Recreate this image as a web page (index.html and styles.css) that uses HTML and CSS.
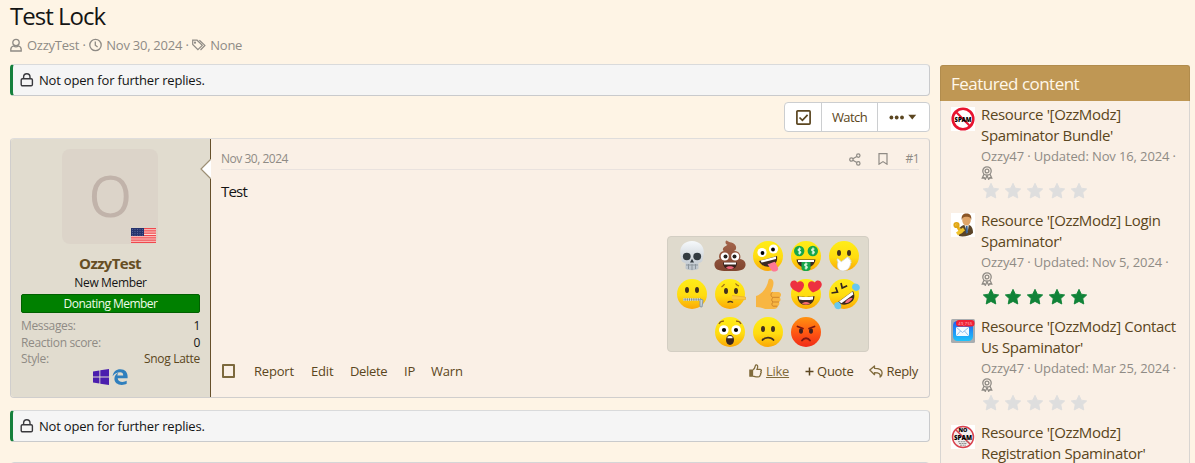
FILE: index.html
```
<!DOCTYPE html>
<html lang="en">
<head>
<meta charset="utf-8">
<title>Test Lock</title>
<link rel="stylesheet" href="styles.css">
</head>
<body>
<svg class="sprite" width="0" height="0" aria-hidden="true">
  <defs>
    <linearGradient id="yellow" x1="0" y1="0" x2="0" y2="1"><stop offset="0" stop-color="#ffed18"/><stop offset=".55" stop-color="#ffdc10"/><stop offset="1" stop-color="#fba706"/></linearGradient>
    <linearGradient id="red" x1="0" y1="0" x2="0" y2="1"><stop offset="0" stop-color="#ff9210"/><stop offset=".5" stop-color="#ff5a12"/><stop offset="1" stop-color="#f02a18"/></linearGradient>
    <linearGradient id="bone" x1="0" y1="0" x2="0" y2="1"><stop offset="0" stop-color="#f6f9fb"/><stop offset="1" stop-color="#b9c1c9"/></linearGradient>
    <linearGradient id="brown" x1="0" y1="0" x2="0" y2="1"><stop offset="0" stop-color="#a4654c"/><stop offset="1" stop-color="#80452f"/></linearGradient>
    <linearGradient id="mail" x1="0" y1="0" x2="0" y2="1"><stop offset="0" stop-color="#1e5df0"/><stop offset="1" stop-color="#1fc4fb"/></linearGradient>
    <symbol id="lock" viewBox="0 0 14 14"><g fill="none" stroke="currentColor" stroke-width="1.4"><rect x="1.2" y="5.8" width="11.2" height="7" rx="1.3"/><path d="M3.6 5.8V4a3.2 3.2 0 0 1 6.4 0v1.800"/></g></symbol>
    <symbol id="star" viewBox="0 0 18 18"><path stroke="currentColor" stroke-width=".9" stroke-linejoin="round" d="M9 1.300l2.300 4.900 5.400.7-3.900 3.700 1 5.400L9 13.400 4.200 16l1-5.400L1.300 6.900l5.400-.7z"/></symbol>
    <symbol id="award" viewBox="0 0 12 14"><g fill="none" stroke="currentColor" stroke-width="1.3"><circle cx="6" cy="5" r="4.200"/><circle cx="6" cy="5" r="1.900"/><path d="M3 8.300L1.300 12l2-.2 1 1.500L6 9.700l1.700 3.600 1-1.500 2 .2L9 8.300"/></g></symbol>
  </defs>
</svg>
<div class="page">
  <main class="main">
    <h1 class="title">Test Lock</h1>
    <div class="byline">
      <svg class="user-icon" width="12" height="14" viewBox="0 0 12 14" fill="none" stroke="currentColor" stroke-width="1.300"><circle cx="6" cy="4.500" r="3.200"/><path d="M3.500 8C1.800 8.500.8 9.700.8 11.400V13h10.400v-1.600c0-1.700-1-2.900-2.700-3.400-1.500 1-3.500 1-5 0z"/></svg>
      <span>OzzyTest</span><span class="dot">·</span>
      <svg class="clock-icon" width="13" height="14" viewBox="0 0 13 14" fill="none" stroke="currentColor" stroke-width="1.300"><circle cx="6.500" cy="7" r="5.700"/><path d="M6.300 3.500v3.800l2.300 1.800"/></svg>
      <span class="byline-date">Nov 30, 2024</span><span class="dot">·</span>
      <svg class="tags-icon" width="14" height="14" viewBox="0 0 14 14" fill="none" stroke="currentColor" stroke-width="1.200"><path d="M.7 2.500v4l5.200 5.200 4.400-4.400-5.200-5.100H.7z"/><path d="M7.400 2.200l5.500 5.200L8.500 12"/><circle cx="3" cy="4.700" r=".5"/></svg>
      <span>None</span>
    </div>

    <div class="notice"><svg width="14" height="14"><use href="#lock"/></svg><span>Not open for further replies.</span></div>

    <div class="toolbar">
      <div class="buttons">
        <a class="button button-check"><svg width="15" height="15" viewBox="0 0 15 15" fill="none" stroke="currentColor" stroke-width="1.700"><rect x=".9" y=".9" width="13.200" height="13.200" rx=".8"/><path d="M3.500 7.500l2.900 2.900 5.200-5.600"/></svg></a>
        <a class="button button-watch">Watch</a>
        <a class="button button-more"><svg width="28" height="8" viewBox="0 0 28 8" fill="currentColor"><circle cx="2.400" cy="4.500" r="1.900"/><circle cx="7.700" cy="4.500" r="1.900"/><circle cx="13" cy="4.500" r="1.900"/><path d="M19.300 1.700h7.900l-3.950 4.800z"/></svg></a>
      </div>
    </div>

    <article class="post">
      <section class="user">
        <div class="avatar"><span>O</span>
          <svg class="flag" width="25" height="15" viewBox="0 0 25 15"><path fill="#fdd9d4" d="M0 0h25v15H0z"/><path stroke="#f0484d" stroke-width="1.250" d="M0 .6h25M0 2.900h25M0 5.200h25M0 7.500h25M0 9.800h25M0 12.100h25M0 14.400h25"/><path fill="#26336d" d="M0 0h13v8H0z"/><path stroke="#6b76a6" stroke-width=".7" stroke-dasharray="1 1.500" d="M1 1.500h12M1 3.500h12M1 5.500h12M1 7.300h12"/></svg>
        </div>
        <h4 class="name">OzzyTest</h4>
        <div class="role">New Member</div>
        <div class="banner">Donating Member</div>
        <dl class="stats">
          <div><dt>Messages:</dt><dd>1</dd></div>
          <div><dt>Reaction score:</dt><dd>0</dd></div>
          <div><dt>Style:</dt><dd class="link">Snog Latte</dd></div>
        </dl>
        <div class="agents">
          <svg width="16" height="16" viewBox="0 0 16 16" fill="#4b1eae"><path d="M0 2.400l6.400-.9v6H0zM7.300 1.300L16 0v7.500H7.300zM0 8.400h6.400v6L0 13.500zM7.300 8.400H16V16l-8.700-1.300z"/></svg>
          <svg width="16" height="16" viewBox="0 0 16 16"><path fill="#2f7fbd" d="M.6 7.200C1.300 2.600 4.200.2 8.300.2c4.900 0 7.300 3.200 7.300 7.300v1.700H5.700c.2 2.500 2.300 3.700 4.800 3.700 1.600 0 3-.4 4.200-1.100v3c-1.400.8-3 1.100-4.900 1.100-4.500 0-7.400-2.500-7.400-6.100 0-2.700 1.500-4.800 3.900-6-.5.700-.8 1.500-.9 2.600h5.800c0-2.100-1-3.200-3-3.200-3 0-5.700 1.500-7.600 4z"/></svg>
        </div>
        <svg class="arrow" width="11" height="20" viewBox="0 0 11 20"><path fill="#fff" d="M11 0L1 10l10 10z"/><path fill="none" stroke="#9c8f75" stroke-width="1.200" d="M10.500.5L1 10l9.500 9.500"/></svg>
      </section>
      <section class="content">
        <header class="post-head">
          <span class="date">Nov 30, 2024</span>
          <div class="post-tools">
            <svg width="12" height="13" viewBox="0 0 12 13" fill="none" stroke="currentColor" stroke-width="1.200"><circle cx="2.400" cy="6.500" r="1.700"/><circle cx="9.300" cy="2.600" r="1.700"/><circle cx="9.300" cy="10.400" r="1.700"/><path d="M3.900 5.700l3.900-2.300M3.900 7.300l3.900 2.300"/></svg>
            <svg width="10" height="12" viewBox="0 0 10 12" fill="none" stroke="currentColor" stroke-width="1.200"><path d="M1 .7h8v10.500L5 8.600l-4 2.600z"/></svg>
            <span>#1</span>
          </div>
        </header>
        <p class="text">Test</p>
        <footer class="actions">
          <span class="box"></span>
          <a class="a-report">Report</a><a class="a-edit">Edit</a><a class="a-delete">Delete</a><a class="a-ip">IP</a><a class="a-warn">Warn</a>
          <div class="respond">
            <a class="like"><svg width="13" height="14" viewBox="0 0 13 14" fill="none" stroke="#806b3c" stroke-width="1.300"><path d="M3.500 6.300c1.700-1 2.600-2.500 2.900-4.600.2-1.200 2.200-1.300 2.300.7.100 1-.3 2-.7 3h3c1.500 0 1.700 1.500.9 2.200.5.700.3 1.500-.3 2 .2.800 0 1.400-.6 1.800 0 1-.6 1.500-1.700 1.500H7c-1.500 0-2.400-.8-3.500-.8z"/><path fill="#806b3c" d="M.9 6.200h1.500v6H.9z"/></svg><u>Like</u></a>
            <a class="quote"><svg width="9" height="9" viewBox="0 0 9 9" stroke="currentColor" stroke-width="1.500"><path d="M4.500.5v8M.5 4.500h8"/></svg>Quote</a>
            <a class="reply"><svg width="14" height="13" viewBox="0 0 14 13" fill="none" stroke="#806b3c" stroke-width="1.300" stroke-linejoin="round"><path d="M.8 5L5.500 1v2.300c4.500 0 7.600.8 7.600 4.700 0 1.700-.7 3-2 4 .6-3-.8-4.300-5.600-4.300V9.700z"/></svg>Reply</a>
          </div>
        </footer>
        <div class="reactions">
          <svg viewBox="0 0 32 32"><path fill="url(#bone)" d="M16 1C8.500 1 4.200 6 4.200 12c0 3 .8 5 1 7 .2 2.600 1.300 3.500 4.300 4v5.500c2 2.200 11 2.200 13 0V23c3-.5 4.100-1.400 4.300-4 .2-2 1-4 1-7C27.800 6 23.500 1 16 1z"/><g fill="#343c42"><ellipse cx="10.800" cy="16.500" rx="3.900" ry="3.700"/><ellipse cx="21.200" cy="16.500" rx="3.900" ry="3.700"/><path d="M16 18.800l2 3.700h-4z"/></g><path stroke="#8c959c" stroke-width="1" d="M10 25h12M12.500 24v5M16 24v6M19.500 24v5"/></svg>
          <svg viewBox="0 0 32 32"><path fill="url(#brown)" d="M11.500 2.200c0-1 1-2.200 1.600-1.400 1.200 1.700 7.300 1.400 8.700 5.300 1 2.700-.5 4.500-1.800 5 4.500 0 7.500 3.300 6 8 4.500.5 6.300 4.200 5.300 7.200-1.500 4.700-6.500 4.700-15.300 4.700S2 31 .7 26.300c-1-3.600 1.300-6.700 5-7.200-2-4 1-7.500 4-8-3-3 3-5.400 3.800-6.300-1.200-.3-2-1.300-2-2.600z"/><circle cx="10.800" cy="16.500" r="4" fill="#fff"/><circle cx="21.200" cy="16.500" r="4" fill="#fff"/><circle cx="11.500" cy="16.500" r="2" fill="#24201e"/><circle cx="20.500" cy="16.500" r="2" fill="#24201e"/><path fill="#37221c" d="M9 22.500h14c0 4.800-3 6.700-7 6.700s-7-1.900-7-6.700z"/><path fill="#fff" d="M10 22.500h12v2H10z"/><path fill="#ef6479" d="M12 27.500c2-1.600 6-1.600 8 0-2 2-6 2-8 0z"/></svg>
          <svg viewBox="0 0 32 32"><circle cx="16" cy="16" r="15" fill="url(#yellow)"/><circle cx="10" cy="12.500" r="4.600" fill="#fff"/><circle cx="21.500" cy="9" r="4.600" fill="#fff"/><circle cx="10.500" cy="13" r="1.900"/><circle cx="21" cy="9.500" r="1.900"/><path fill="#3b2a24" d="M7 21l18-5c1 6-2.300 9.700-6.800 10.500C13.500 27.400 9 25.500 7 21z"/><path fill="#fff" d="M8.500 20.600l15.500-4.200v2.500L9.600 22.500z"/><path fill="#ff7895" d="M15.500 24c2.500-.2 5-2 7.500-2.300l2.700 5.300c1.300 2.700-.7 4.200-2.400 4.500-2.200.4-3.700-.5-4.700-2.500z"/></svg>
          <svg viewBox="0 0 32 32"><circle cx="16" cy="16" r="15" fill="url(#yellow)"/><circle cx="9.200" cy="11" r="5.200" fill="#16a54a"/><circle cx="22.800" cy="11" r="5.200" fill="#16a54a"/><path fill="#3b2a24" d="M6.500 19.500h19c-.8 5.500-4.500 8-9.500 8s-8.700-2.500-9.500-8z"/><path fill="#fff" d="M8 20h16v2H8z"/><path fill="#16a54a" d="M11.500 22h9v6.500c0 3.400-9 3.400-9 0z"/><g fill="none" stroke="#d9f7dc" stroke-width="1.200"><path id="dollar" d="M11 9.200c-2-1.200-4 .8-2 1.700 2.500.7 2.500 2.800-.8 2.100M9.500 7.500v7"/><use href="#dollar" x="13.500"/><use href="#dollar" x="6.500" y="15"/></g></svg>
          <svg viewBox="0 0 32 32"><circle cx="16" cy="16" r="15" fill="url(#yellow)"/><ellipse cx="11" cy="13" rx="2" ry="3" fill="#42301f"/><ellipse cx="21" cy="13" rx="2" ry="3" fill="#42301f"/><path fill="#fff" stroke="#cfd5da" stroke-width=".8" d="M10 22l-1-2c0-1.500 1.300-1.500 2-.3l2.300 2 6-4.500c1-.8 2 .4 1.200 1.200 1.300-.6 2 .6 1.200 1.300 1.200-.2 1.500 1 .8 1.600 1 .1 1 1.300.2 1.800-.7 5-3.700 7.900-7.700 7.900-4.500 0-6.500-4-5-9z"/></svg>
          <svg viewBox="0 0 32 32"><circle cx="16" cy="16" r="15" fill="url(#yellow)"/><ellipse cx="11" cy="12" rx="2" ry="3" fill="#42301f"/><ellipse cx="21" cy="12" rx="2" ry="3" fill="#42301f"/><path stroke="#788994" stroke-width="2" d="M7.500 21.500H25"/><path stroke="#d0dadd" stroke-width="3" stroke-dasharray="1 1.200" d="M7.500 21.500H25"/><path stroke="#8b9ba5" fill="#c8d2d7" d="M24 21l3 1-1 7-2-.4z"/></svg>
          <svg viewBox="0 0 32 32"><circle cx="16" cy="16" r="15" fill="url(#yellow)"/><ellipse cx="12" cy="13" rx="2" ry="3" fill="#42301f"/><ellipse cx="22" cy="13" rx="2" ry="3" fill="#42301f"/><path fill="#fbc83e" stroke="#e5a82e" stroke-width=".6" d="M18 17.500l13 1.500c1.400.3 1.400 2.500 0 2.700L18 21.800"/><path fill="none" stroke="#513724" stroke-width="1.500" d="M13.500 24.500c1.500-1 4-1 5.500 0"/><path fill="none" stroke="#a06f18" stroke-width="1.200" d="M7.500 9c1.500-1 2.500-1.800 3-3M21.500 5.500c1 1.500 2 2 3.500 2.500"/></svg>
          <svg viewBox="0 0 32 32"><path fill="#f8b642" d="M4 18c6-2 11-8 12.500-16 .3-2 5-2 5 2.700 0 3.300-1.500 6.300-2.500 9.300H26c4 0 3.500 5 1.500 5.300 1.700 1.400 1.200 4-.5 4.700 1 1.700 0 3.800-1.500 4.200.2 2-1.200 2.800-3.500 2.800h-7c-4 0-6-2-11-2z"/><path fill="none" stroke="#cf852a" d="M27.500 19.300h-7c-2-.8-2-4 0-5M27 24h-6c-1.700-.6-1.700-3.700 0-4.500M25.500 28.200H21c-1.500-.6-1.500-3.400 0-4"/></svg>
          <svg viewBox="0 0 32 32"><circle cx="16" cy="16" r="15" fill="url(#yellow)"/><path id="heart" fill="#ed3140" d="M9 14.500C4 12.800-.3 9.500.3 5.800 1 2 5.500 1.300 7.400 4.500c2.600-2.600 7-.8 6.600 3-.2 2.700-2.500 5.500-5 7z"/><use href="#heart" transform="translate(32 0) scale(-1 1)"/><path fill="#422b21" d="M7.500 18c5 1.200 12 1.200 17 0 0 6-3.500 9-8.500 9s-8.500-3-8.500-9z"/><path fill="#fff" d="M9 18.500c4 .8 10 .8 14 0v3c-4 .7-10 .7-14 0z"/><path fill="#f36a6a" d="M12 25.500c2-2 6-2 8 0-2 1.500-6 1.500-8 0z"/></svg>
          <svg viewBox="0 0 32 32"><circle cx="16" cy="16" r="15" fill="url(#yellow)"/><path fill="none" stroke="#33261e" stroke-width="1.700" d="M3.500 15l6-1-1.800-4.800M13 5l1.200 5 5-2.200"/><path fill="#3b2820" d="M10 24L25 13c2.500 5 1.400 9-2.400 11.600C18.500 27.400 13 27.500 10 24z"/><path fill="#fff" d="M11 23.500l13.500-10 .9 3-12 8.800z"/><path fill="#f26e85" d="M17 25c1-3 4.500-5.400 7.500-5-1 3-4.500 5.500-7.500 5z"/><path fill="#67c7ef" d="M24 10c0-5 3-5 5.500-4 3.500 1.500 3 7-1 7-2 0-3-1.300-4.500-3zM11 24c-5-.2-5.300 2.600-4.300 5 1.500 3.300 7 2.700 6.600-1-.1-1.600-1-2.600-2.300-4z"/></svg>
          <svg viewBox="0 0 32 32"><circle cx="16" cy="16" r="15" fill="url(#yellow)"/><circle cx="9.800" cy="14" r="4.800" fill="#fff"/><circle cx="22.200" cy="14" r="4.800" fill="#fff"/><circle cx="10" cy="14" r="2.100"/><circle cx="22" cy="14" r="2.100"/><ellipse cx="16" cy="24" rx="4" ry="5" fill="#3b2720"/><path fill="#fff" d="M13.500 20.800c1.500-1 3.500-1 5 0v1.500h-5z"/><path fill="none" stroke="#8d5c14" stroke-width="1.300" d="M5 8c1-2 3-3 5-2.800M27 8c-1-2-3-3-5-2.800"/></svg>
          <svg viewBox="0 0 32 32"><circle cx="16" cy="16" r="15" fill="url(#yellow)"/><ellipse cx="11" cy="13" rx="2" ry="3" fill="#42301f"/><ellipse cx="21" cy="13" rx="2" ry="3" fill="#42301f"/><path fill="none" stroke="#42301f" stroke-width="1.800" stroke-linecap="round" d="M10.500 24c2.500-3.300 8.500-3.300 11 0"/></svg>
          <svg viewBox="0 0 32 32"><circle cx="16" cy="16" r="15" fill="url(#red)"/><ellipse cx="11" cy="15" rx="2" ry="2.800" fill="#42201f"/><ellipse cx="21" cy="15" rx="2" ry="2.800" fill="#42201f"/><path fill="none" stroke="#7d1610" stroke-width="1.800" stroke-linecap="round" d="M7.500 10.500l5.500 2M24.500 10.500l-5.500 2M12 24.500c2-3 6-3 8 0"/></svg>
        </div>
      </section>
    </article>

    <div class="notice notice-end"><svg width="14" height="14"><use href="#lock"/></svg><span>Not open for further replies.</span></div>
    <div class="next-block"></div>
  </main>

  <aside class="sidebar">
    <h3 class="side-title">Featured content</h3>
    <ul class="features">
      <li>
        <svg class="thumb" viewBox="0 0 24 24"><path fill="#fff" d="M0 0h24v24H0z"/><circle cx="12" cy="12" r="10.300" fill="none" stroke="#e8142f" stroke-width="2.600"/><path stroke="#e8142f" stroke-width="2" d="M4.800 4.800l14.400 14.400"/><text class="spam" x="12" y="14.800" textLength="17" lengthAdjust="spacingAndGlyphs">SPAM</text></svg>
        <div><a>Resource '[OzzModz]<br>Spaminator Bundle'</a><p>Ozzy47 · Updated: Nov 16, 2024 ·<br><svg class="award"><use href="#award"/></svg></p><div class="stars"><svg><use href="#star"/></svg><svg><use href="#star"/></svg><svg><use href="#star"/></svg><svg><use href="#star"/></svg><svg><use href="#star"/></svg></div></div>
      </li>
      <li>
        <svg class="thumb" viewBox="0 0 24 24"><path fill="#fff" d="M0 0h24v24H0z"/><path fill="#5a4428" d="M8 23c-1-7 1-10 5-11h5c3 1 4 4 4 8-3 3-10 4-14 3z"/><path fill="#e8edf0" d="M13 11h5l-1.500 9z"/><path fill="#3a6296" d="M15 13h1.500l.5 6-1.300 2-1-2z"/><ellipse cx="15.500" cy="7" rx="4.300" ry="5.500" fill="#e0a568"/><path fill="#8b5526" d="M10.800 7C10 2 12.500.5 15.500.5S21 2 20.200 7c-.7-3-2-3.500-4.700-3.300C13 3.500 11.500 4 10.800 7z"/><path fill="none" stroke="#e9b11c" stroke-width="3" d="M5 11l3 5 3 4"/><circle cx="5.500" cy="12" r="2.200" fill="none" stroke="#e0a514" stroke-width="1.800"/><path stroke="#f0c32d" stroke-width="3.500" d="M6 21l7-5"/></svg>
        <div><a>Resource '[OzzModz] Login<br>Spaminator'</a><p>Ozzy47 · Updated: Nov 5, 2024 ·<br><svg class="award"><use href="#award"/></svg></p><div class="stars rated"><svg><use href="#star"/></svg><svg><use href="#star"/></svg><svg><use href="#star"/></svg><svg><use href="#star"/></svg><svg><use href="#star"/></svg></div></div>
      </li>
      <li>
        <svg class="thumb" viewBox="0 0 24 24"><rect width="24" height="24" rx="1.500" fill="#a9adb0"/><rect x="2" y="2" width="20" height="20" rx="4.500" fill="url(#mail)"/><rect x="5" y="8" width="13" height="9" rx="1" fill="#f4faff"/><path fill="none" stroke="#76afe8" stroke-width=".8" d="M5.500 8.500l6 5 6-5M5.500 16.500l4-4.500M17.500 16.500l-4-4.500"/><rect x="5" y="1" width="18.500" height="6.500" rx="3" fill="#f02035"/><text class="count" x="14.300" y="6.100" textLength="14">49,755</text></svg>
        <div><a>Resource '[OzzModz] Contact<br>Us Spaminator'</a><p>Ozzy47 · Updated: Mar 25, 2024 ·<br><svg class="award"><use href="#award"/></svg></p><div class="stars"><svg><use href="#star"/></svg><svg><use href="#star"/></svg><svg><use href="#star"/></svg><svg><use href="#star"/></svg><svg><use href="#star"/></svg></div></div>
      </li>
      <li>
        <svg class="thumb" viewBox="0 0 24 24"><path fill="#fff" d="M0 0h24v24H0z"/><circle cx="12" cy="12" r="10.500" fill="#f3eeee" stroke="#d9424d" stroke-width="1.500"/><path stroke="#d9424d" stroke-width="1.600" d="M4.500 4.500l15 15"/><text class="no" x="12" y="6.900">NO</text><text class="spam" x="12" y="14.600" textLength="18" lengthAdjust="spacingAndGlyphs">SPAM</text><path stroke="#777" stroke-width=".8" stroke-dasharray="2 .6" d="M7 16.700h10M8 18.500h8M9 20.200h6"/></svg>
        <div><a>Resource '[OzzModz]<br>Registration Spaminator'</a></div>
      </li>
    </ul>
  </aside>
</div>
</body>
</html>
```
FILE: styles.css
```
*{box-sizing:border-box}
body{margin:0;background:#fef4e5;color:#141414;font:13px/18px "Open Sans","Noto Sans",sans-serif;letter-spacing:-.19px;overflow:hidden}
h1,h3,h4,p,dl,dd,ul{margin:0;padding:0;font-weight:400}
svg{display:block;flex:none}
.sprite{position:absolute}
.page{display:flex;gap:10px;height:463px;padding:0 5px 0 10px;overflow:hidden}
.main{width:920px;flex:none}
.title{height:36px;font-size:24px;line-height:32px;letter-spacing:-1px}
.byline{display:flex;align-items:center;height:18px;color:#8f8b85;letter-spacing:-.25px}
.user-icon{margin-right:5px}
.byline .dot{margin:0 3.500px}
.clock-icon{margin-right:4px}
.tags-icon{margin-right:4px}
.notice{display:flex;align-items:center;gap:5px;height:32px;margin-top:10px;padding-left:7px;border:1px solid #c9cacc;border-left:3px solid #15803d;border-radius:4px;background:#f5f5f5;border-top-color:#d9dadb}
.notice svg{color:#39393d}
.toolbar{display:flex;justify-content:flex-end;margin:6px 0}
.buttons{display:flex;height:30px;border:1px solid #ccced0;border-radius:4px;background:#fff;color:#5b4620}
.button{display:flex;align-items:center;justify-content:center;border-left:1px solid #ccced0;letter-spacing:-.6px}
.button:first-child{border-left:0}
.button-check{width:36px}
.button-watch{width:56px}
.button-more{width:52px;padding-right:2px}
.post{display:flex;height:260px;border:1px solid #d0cecd;border-top-color:#dfdddc;border-radius:4px;background:#faf0e6}
.user{position:relative;width:200px;padding:10px;background:#e1dccf;border-right:1px solid #66502b;border-radius:3px 0 0 3px;font-size:12px;line-height:16px;letter-spacing:-.35px;text-align:center}
.arrow{position:absolute;right:-1px;top:20px}
.avatar{position:relative;display:flex;align-items:center;justify-content:center;width:96px;height:95px;margin:0 auto 0 41px;border-radius:8px;background:#dcd4c9;color:#c1b3aa;font-size:56px;line-height:95px}
.avatar span{margin-top:-2px}
.flag{position:absolute;right:2px;bottom:1px}
.name{margin-top:9px;color:#664e24;font-size:15px;font-weight:700;line-height:20px;letter-spacing:-.6px;padding-right:1px}
.role{margin-top:1px;line-height:17px}
.banner{height:19px;margin-top:3px;border:1px solid #006000;border-radius:2px;background:#008000;color:#effbe9;line-height:17px;letter-spacing:-.54px}
.stats{margin-top:5px;line-height:16.5px}
.stats div{display:flex;justify-content:space-between}
.stats dt{color:#8f8b85}
.stats .link{color:#5b4620;letter-spacing:-.3px}
.agents{display:flex;justify-content:center;gap:3px;margin:1px 1px 0 0}
.content{position:relative;flex:1;display:flex;flex-direction:column;padding:10px}
.post-head{display:flex;justify-content:space-between;align-items:center;height:21px;border-bottom:1px solid #e9e2de;color:#8f8b85;font-size:12px}
.date{letter-spacing:-.48px}
.post-tools{display:flex;align-items:center;gap:17px;letter-spacing:-.5px}
.text{margin-top:11px;font-size:15px;line-height:21px;letter-spacing:-.8px}
.actions{display:flex;align-items:center;height:22px;margin-top:auto;margin-bottom:5px;color:#5b4620}
.box{width:13px;height:14px;margin:0 19px 0 1px;border:2px solid #7c693d;border-radius:1px}
.a-report{width:57px}.a-edit{width:39px}.a-delete{width:54px;letter-spacing:-.35px}.a-ip{width:27px}
.respond{display:flex;gap:16px;margin:0 1px 0 auto}
.respond a{display:flex;align-items:center;gap:3px;letter-spacing:-.3px}
.like u{color:#806b3c;text-underline-offset:1px}
.respond .like{gap:4px}
.reactions{position:absolute;right:60px;top:97px;display:flex;flex-wrap:wrap;justify-content:center;width:202px;height:116px;padding:0 5px;border:1px solid #d3cec3;border-radius:4px;background:#dfdacd}
.reactions svg{width:38px;height:38px;padding:3px}
.notice-end{margin-top:12px}
.next-block{height:12px;margin-top:20px;border:1px solid #d5d6d7;border-radius:4px 4px 0 0;background:#faf0e6}
.sidebar{width:250px;height:420px;margin-top:65px;border:1px solid #d8d5d2;border-radius:4px 4px 0 0;background:#faf0e6}
.side-title{height:36px;margin:-1px -1px 0;padding:0 10px;border:1px solid #b18c4d;border-bottom:0;border-radius:3px 3px 0 0;background:#bf9754;color:#fff8ea;font-size:17px;line-height:35px;letter-spacing:-.52px}
.features{padding:3px 10px;list-style:none}
.features li{display:flex;gap:6px;height:106px}
.features a{display:block;color:#5b4620;font-size:15px;line-height:21px;letter-spacing:-.34px;white-space:nowrap}
.features p{color:#8f8b85;line-height:18px;letter-spacing:-.12px;white-space:nowrap;padding-top:1px}
.thumb{width:24px;height:24px;margin-top:3px}
.spam,.no,.count{text-anchor:middle;letter-spacing:0;font-family:"Open Sans",sans-serif;font-weight:800;font-size:7px}
.no{font-size:5.500px}
.count{font-size:4px;fill:#ffd0d3;font-weight:400}
.award{width:12px;height:14px;margin-top:1px}
.stars{display:flex;gap:4px;margin:2px 0 0 1px;color:#dedede}
.stars svg{width:18px;height:18px;fill:currentColor}
.rated{color:#118338}
```
